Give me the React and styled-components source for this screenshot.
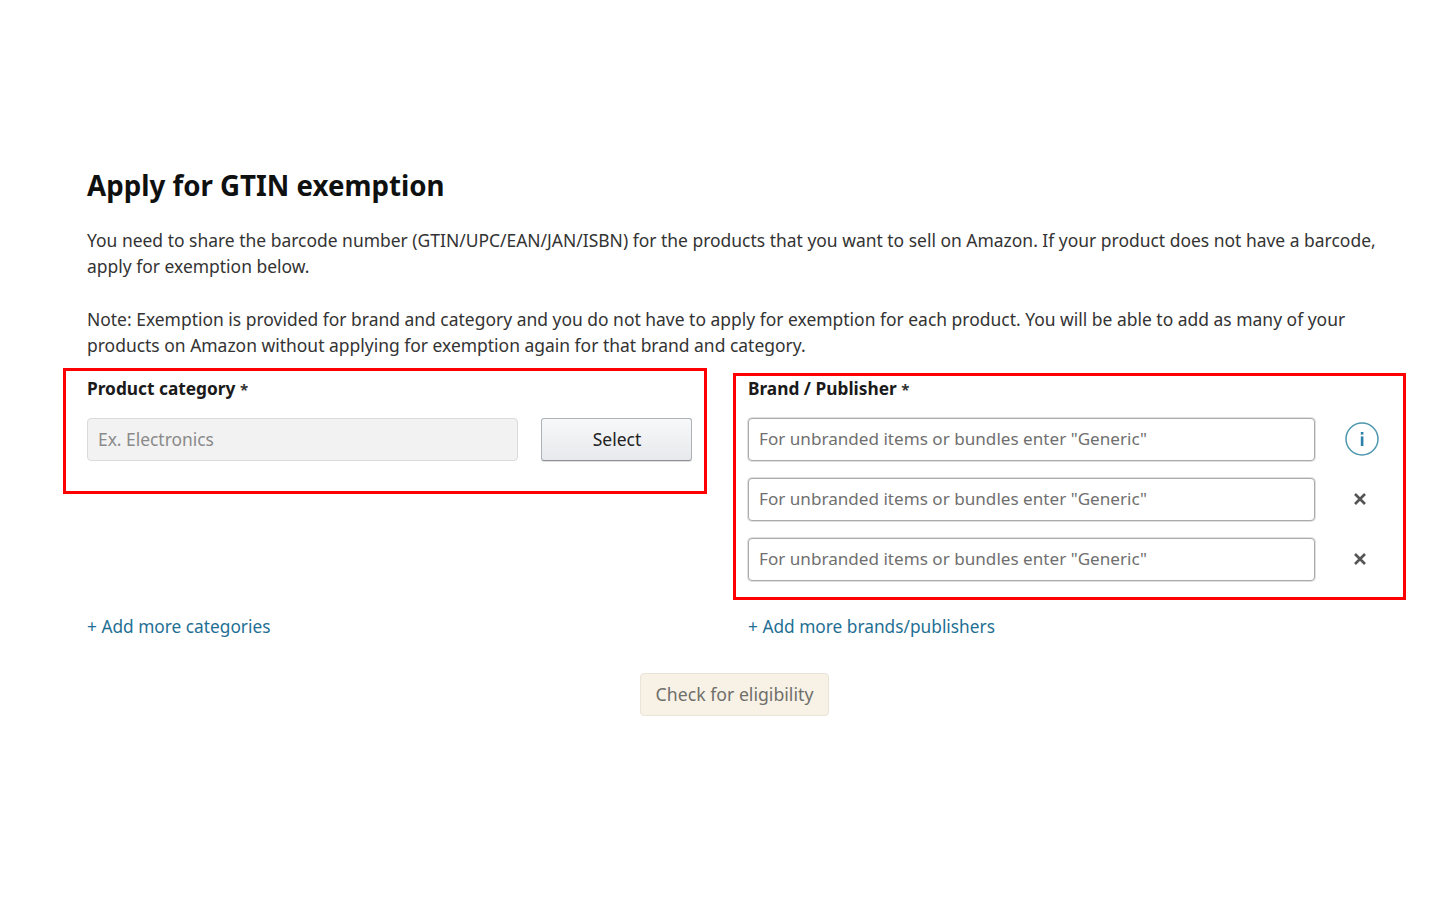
import React from "react";
import styled, { createGlobalStyle } from "styled-components";

const GlobalStyle = createGlobalStyle`
  html, body { margin: 0; padding: 0; background: #fff; }
  body { font-family: "Noto Sans", "Open Sans", sans-serif; color: #111; }
`;

const Page = styled.main`
  width: 1440px;
  height: 900px;
  box-sizing: border-box;
  padding: 166px 60px 0 87px;
`;

const Title = styled.h1`
  margin: 0;
  font-size: 27.7px;
  line-height: 38px;
  font-weight: 700;
  color: #0f1111;
`;

const Paragraph = styled.p`
  margin: ${(p) => p.$top}px 0 0;
  font-size: 17.47px;
  line-height: 26px;
  color: #333;
  width: 1300px;
`;

const Columns = styled.div`
  display: grid;
  grid-template-columns: 605px 631px;
  column-gap: 56px;
  margin-top: 19px;
`;

const Column = styled.section`
  position: relative;
`;

const Frame = styled.div`
  position: absolute;
  box-sizing: border-box;
  border: 3px solid #f00;
  pointer-events: none;
  left: ${(p) => p.$left}px;
  top: ${(p) => p.$top}px;
  width: ${(p) => p.$width}px;
  height: ${(p) => p.$height}px;
`;

const Label = styled.div`
  font-size: 17.3px;
  line-height: 24px;
  font-weight: 700;
  color: #1a1a1a;
  margin-bottom: 17px;
`;

const Required = styled.span`
  font-size: 15px;
  font-weight: 700;
  color: #333;
`;

const Row = styled.div`
  display: flex;
  align-items: center;
  height: 43px;
  margin-bottom: 17px;
`;

const Input = styled.input`
  box-sizing: border-box;
  flex: none;
  height: 43px;
  width: ${(p) => p.$width}px;
  padding: 0 10px 2px;
  border: 1px solid ${(p) => (p.disabled ? "#d9dcdc" : "#ababab")};
  border-radius: 4px;
  background: ${(p) => (p.disabled ? "#f2f2f2" : "#fff")};
  font-family: inherit;
  font-size: ${(p) => (p.disabled ? 17.4 : 17.13)}px;
  box-shadow: ${(p) => (p.disabled ? "none" : "0 0 0 1px rgba(166,166,166,0.35)")};

  &::placeholder {
    color: ${(p) => (p.disabled ? "#8a8a8a" : "#6f6f6f")};
    opacity: 1;
  }
`;

const SelectButton = styled.button`
  box-sizing: border-box;
  width: 151px;
  height: 43px;
  margin-left: 23px;
  padding: 0 0 2px 1px;
  border: 1px solid #adb1b8;
  border-bottom-color: #8d9096;
  border-radius: 3px;
  background: linear-gradient(#f7f8fa, #e7e9ec);
  box-shadow: 0 1px 0 rgba(0, 0, 0, 0.12);
  font-family: inherit;
  font-size: 17.5px;
  color: #222;
`;

const IconSlot = styled.span`
  display: flex;
  align-items: center;
  justify-content: center;
  flex: none;
  width: 34px;
  margin: 0 0 2px 30px;
`;

const CloseGlyph = styled.svg`
  margin-right: 4px;
`;

const AddLink = styled.a`
  display: block;
  font-size: 17.3px;
  line-height: 24px;
  color: #1f6f94;
  text-decoration: none;
  margin-top: ${(p) => p.$top}px;
`;

const Footer = styled.div`
  display: flex;
  justify-content: center;
  width: 1295px;
  margin-top: 34px;
`;

const CheckButton = styled.button`
  box-sizing: border-box;
  width: 189px;
  height: 43px;
  padding: 0 0 2px;
  border: 1px solid #eae4d8;
  border-radius: 4px;
  background: #f8f2e6;
  font-family: inherit;
  font-size: 17.7px;
  color: #6f6f6a;
`;

function InfoIcon() {
  return (
    <svg width="34" height="34" viewBox="0 0 34 34" fill="none">
      <circle cx="17" cy="17" r="16" stroke="#4d97ad" strokeWidth="1.5" />
      <rect x="15.8" y="14.4" width="2.6" height="9.6" fill="#2a80ab" />
      <rect x="15.8" y="10" width="2.6" height="2.6" fill="#2a80ab" />
    </svg>
  );
}

function CloseIcon() {
  return (
    <CloseGlyph width="12" height="12" viewBox="0 0 12 12" fill="none">
      <path d="M1 1 L11 11 M11 1 L1 11" stroke="#555" strokeWidth="2.6" />
    </CloseGlyph>
  );
}

const GENERIC = 'For unbranded items or bundles enter "Generic"';

export default function App() {
  return (
    <Page>
      <GlobalStyle />
      <Title>Apply for GTIN exemption</Title>
      <Paragraph $top={23}>
        You need to share the barcode number (GTIN/UPC/EAN/JAN/ISBN) for the products that you want to sell on Amazon. If your product does not have a barcode, apply for exemption below.
      </Paragraph>
      <Paragraph $top={27}>
        Note: Exemption is provided for brand and category and you do not have to apply for exemption for each product. You will be able to add as many of your products on Amazon without applying for exemption again for that brand and category.
      </Paragraph>
      <Columns>
        <Column>
          <Frame $left={-24} $top={-9} $width={644} $height={126} />
          <Label>Product category <Required>*</Required></Label>
          <Row>
            <Input disabled $width={431} placeholder="Ex. Electronics" />
            <SelectButton>Select</SelectButton>
          </Row>
          <AddLink href="#" $top={154}>+ Add more categories</AddLink>
        </Column>
        <Column>
          <Frame $left={-15} $top={-4} $width={673} $height={227} />
          <Label>Brand / Publisher <Required>*</Required></Label>
          <Row>
            <Input $width={567} placeholder={GENERIC} />
            <IconSlot><InfoIcon /></IconSlot>
          </Row>
          <Row>
            <Input $width={567} placeholder={GENERIC} />
            <IconSlot><CloseIcon /></IconSlot>
          </Row>
          <Row>
            <Input $width={567} placeholder={GENERIC} />
            <IconSlot><CloseIcon /></IconSlot>
          </Row>
          <AddLink href="#" $top={34}>+ Add more brands/publishers</AddLink>
        </Column>
      </Columns>
      <Footer>
        <CheckButton>Check for eligibility</CheckButton>
      </Footer>
    </Page>
  );
}
